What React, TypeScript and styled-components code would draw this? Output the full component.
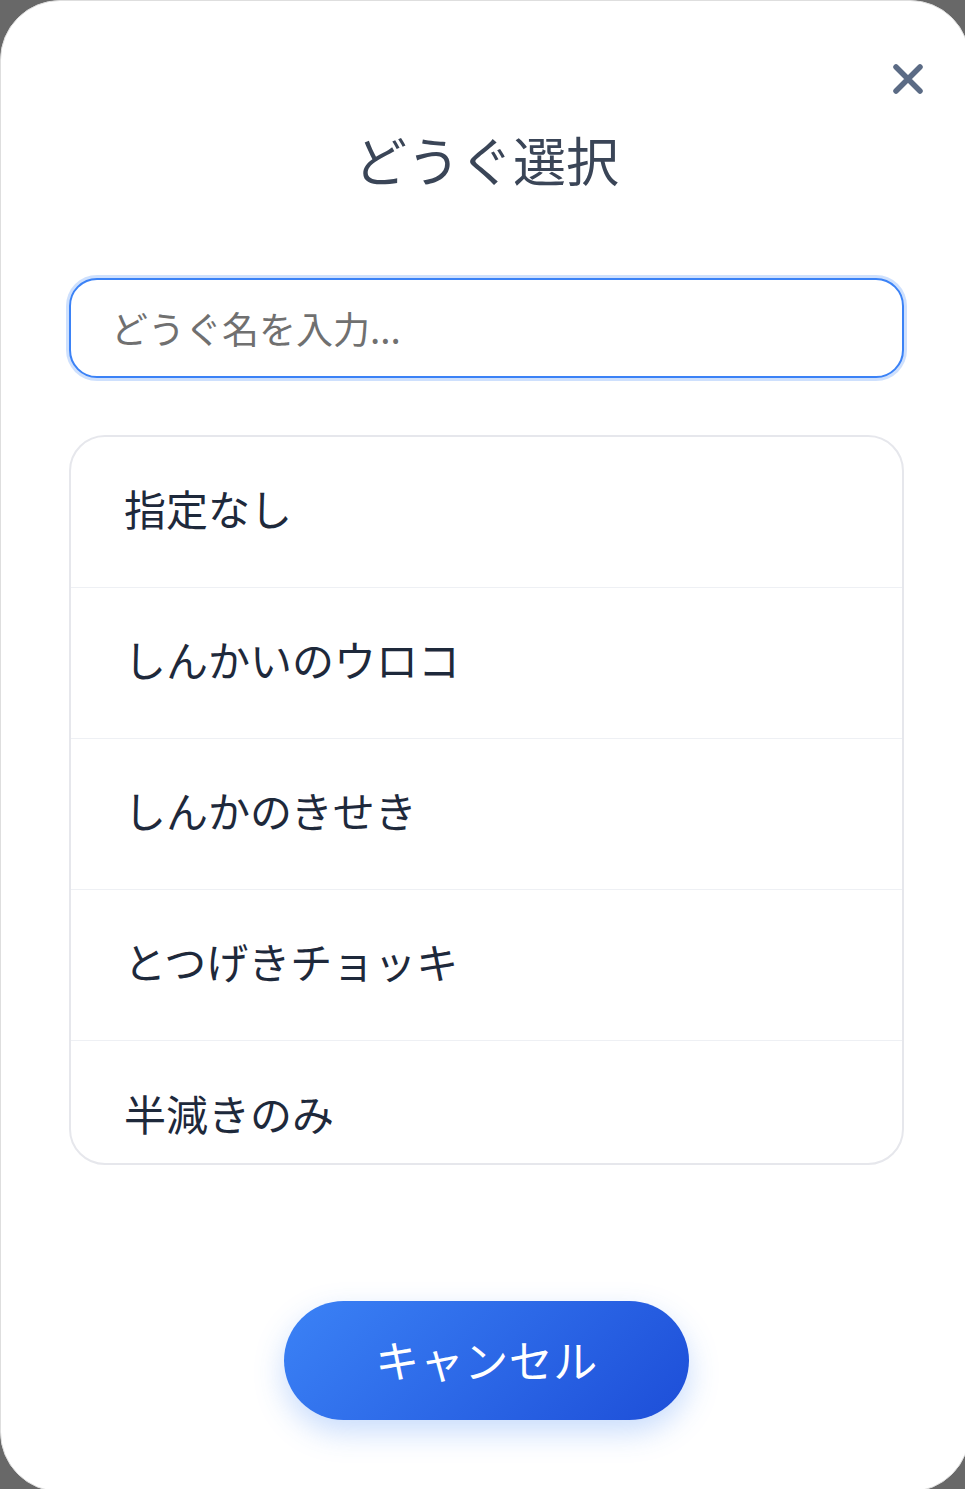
import styled, { createGlobalStyle } from "styled-components";

const GlobalStyle = createGlobalStyle`
  html, body {
    margin: 0;
    padding: 0;
    overflow: hidden;
    background: #686868;
  }
  body {
    font-family: "Noto Sans CJK JP", "Noto Sans", sans-serif;
  }
`;

const Modal = styled.div`
  position: relative;
  box-sizing: border-box;
  width: 970px;
  height: 1492px;
  background: #ffffff;
  border: 1px solid #dedede;
  border-radius: 60px;
  padding: 126px 65px 0 68px;
  display: flex;
  flex-direction: column;
`;

const CloseButton = styled.button`
  position: absolute;
  top: 62px;
  right: 45px;
  width: 32px;
  height: 32px;
  padding: 0;
  border: none;
  background: none;
  display: flex;
  align-items: center;
  justify-content: center;
  cursor: pointer;
`;

const Title = styled.h1`
  margin: 0;
  font-size: 53px;
  line-height: 64px;
  font-weight: 400;
  color: #3a4557;
  text-align: center;
`;

const SearchInput = styled.input`
  box-sizing: border-box;
  margin-top: 87px;
  width: 100%;
  height: 100px;
  padding: 0 0 0 40px;
  border: 2px solid #3b82f6;
  border-radius: 28px;
  box-shadow: 0 0 0 3px rgba(59, 130, 246, 0.25);
  outline: none;
  font-family: inherit;
  font-size: 37px;
  color: #1e293b;
  &::placeholder {
    color: #707070;
  }
`;

const List = styled.ul`
  box-sizing: border-box;
  margin: 57px 0 0;
  padding: 0;
  list-style: none;
  height: 730px;
  border: 2px solid #e6e7ec;
  border-radius: 36px;
  overflow-y: auto;
  scrollbar-width: none;
`;

const Item = styled.li<{ $last?: boolean }>`
  box-sizing: border-box;
  height: 151px;
  padding: 0 0 9px 53px;
  display: flex;
  align-items: center;
  font-size: 42px;
  color: #1e293b;
  border-bottom: ${(p) => (p.$last ? "none" : "1px solid #eef0f4")};
`;

const Footer = styled.div`
  margin-top: 136px;
  display: flex;
  justify-content: center;
`;

const CancelButton = styled.button`
  width: 405px;
  height: 119px;
  padding: 0 0 4px;
  border: none;
  border-radius: 60px;
  background: linear-gradient(135deg, #3b82f6 0%, #1d4ed8 100%);
  box-shadow: 0 12px 30px rgba(59, 130, 246, 0.28);
  color: #ffffff;
  font-family: inherit;
  font-size: 44px;
  font-weight: 400;
  letter-spacing: 0.5px;
  cursor: pointer;
`;

const tools = [
  "指定なし",
  "しんかいのウロコ",
  "しんかのきせき",
  "とつげきチョッキ",
  "半減きのみ",
];

function App() {
  return (
    <>
      <GlobalStyle />
      <Modal>
        <CloseButton aria-label="閉じる">
          <svg width="32" height="32" viewBox="0 0 32 32">
            <path
              d="M4 4 L28 28 M28 4 L4 28"
              stroke="#5b6b85"
              strokeWidth="5.5"
              strokeLinecap="round"
            />
          </svg>
        </CloseButton>
        <Title>どうぐ選択</Title>
        <SearchInput placeholder="どうぐ名を入力..." />
        <List>
          {tools.map((t, i) => (
            <Item key={t} $last={i === tools.length - 1}>
              {t}
            </Item>
          ))}
        </List>
        <Footer>
          <CancelButton>キャンセル</CancelButton>
        </Footer>
      </Modal>
    </>
  );
}

export default App;
